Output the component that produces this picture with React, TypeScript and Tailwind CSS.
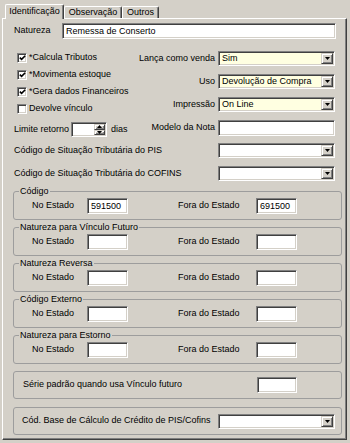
import React from "react";

const sunken =
  "border border-t-[#808080] border-l-[#808080] border-b-white border-r-white shadow-[inset_1px_1px_0_#404040,inset_-1px_-1px_0_#d4d0c8]";
const raised =
  "border border-t-[#d4d0c8] border-l-[#d4d0c8] border-b-[#404040] border-r-[#404040] shadow-[inset_1px_1px_0_#fff,inset_-1px_-1px_0_#808080] bg-[#d4d0c8]";

function Arrow({ up }: { up?: boolean }) {
  return (
    <svg width="5" height="3" viewBox="0 0 5 3" className="block">
      <path d={up ? "M2.5 0L5 3H0Z" : "M0 0H5L2.5 3Z"} fill="#000" />
    </svg>
  );
}

function Field({ value, className = "" }: { value?: string; className?: string }) {
  return (
    <div className={`${sunken} bg-white h-[16px] flex items-center pl-[3px] leading-none shrink-0 ${className}`}>
      {value}
    </div>
  );
}

function Select({ value, yellow }: { value?: string; yellow?: boolean }) {
  return (
    <div
      className={`${sunken} ${yellow ? "bg-[#ffffe1]" : "bg-white"} h-[15px] w-[117px] shrink-0 flex items-center p-[1px]`}
    >
      <span className="flex-1 pl-[2px] leading-none">{value}</span>
      <div className={`${raised} w-[12px] h-full flex items-center justify-center`}>
        <Arrow />
      </div>
    </div>
  );
}

function Check({ label, checked }: { label: string; checked?: boolean }) {
  return (
    <div className="h-[17px] flex items-center gap-[2px] pl-[4px]">
      <div className={`${sunken} bg-white w-[10px] h-[10px] flex items-center justify-center`}>
        {checked && (
          <svg width="7" height="6" viewBox="0 0 7 6" className="block">
            <path d="M0.8 2.6L2.6 4.4L6.2 0.8" stroke="#000" strokeWidth="1.6" fill="none" />
          </svg>
        )}
      </div>
      <span>{label}</span>
    </div>
  );
}

function RightRow({ label, children }: { label: string; children: React.ReactNode }) {
  return (
    <div className="h-[15px] flex items-center justify-end gap-[3px] pr-[7px]">
      <span>{label}</span>
      {children}
    </div>
  );
}

function Group({ title }: { title: string }) {
  return (
    <fieldset className="w-full border border-[#9d9d9d] rounded-[3px] px-0 pb-[5px]">
      <legend className="ml-[5px] px-[1px] leading-[13px]">{title}</legend>
      <div className="h-[16px] flex items-center pl-[18px]">
        <span className="w-[55px]">No Estado</span>
        <Field value={title === "Código" ? "591500" : ""} className="w-[41px]" />
        <span className="ml-[50px] w-[78px]">Fora do Estado</span>
        <Field value={title === "Código" ? "691500" : ""} className="w-[41px]" />
      </div>
    </fieldset>
  );
}

export default function App() {
  return (
    <div className="w-[350px] h-[443px] bg-[#d4d0c8] pt-[4px] px-[2px] text-[9px] text-black font-['Liberation_Sans',Arial,sans-serif]">
      <div className="flex items-end pl-[3px] h-[14px]">
        <div className="relative z-10 -mb-px h-[15px] w-[59px] bg-[#d4d0c8] border-t border-l border-white border-r border-r-[#404040] rounded-t-[2px] shadow-[inset_-1px_0_0_#808080] flex items-center justify-center">
          Identificação
        </div>
        <div className="h-[12px] w-[58px] border-t border-l border-white border-r border-r-[#404040] rounded-t-[2px] shadow-[inset_-1px_0_0_#808080] flex items-center justify-center">
          Observação
        </div>
        <div className="h-[12px] w-[37px] border-t border-l border-white border-r border-r-[#404040] rounded-t-[2px] shadow-[inset_-1px_0_0_#808080] flex items-center justify-center">
          Outros
        </div>
      </div>

      <div className="w-[345px] border border-t-white border-l-white border-r-[#404040] border-b-[#404040] shadow-[inset_-1px_-1px_0_#808080] pt-[4px] pl-[10px] pr-[4px] pb-[4px]">
        <div className="h-[16px] flex items-center pl-[1px]">
          <span className="w-[48px]">Natureza</span>
          <Field value="Remessa de Conserto" className="w-[274px]" />
        </div>

        <div className="mt-[10px] flex">
          <div className="w-[124px] shrink-0">
            <Check label="*Calcula Tributos" checked />
            <Check label="*Movimenta estoque" checked />
            <Check label="*Gera dados Financeiros" checked />
            <Check label="Devolve vínculo" />
            <div className="mt-[5px] h-[15px] flex items-center pl-[1px]">
              <span className="w-[57px]">Limite retorno</span>
              <div className={`${sunken} bg-white w-[36px] h-[15px] flex justify-end p-[1px]`}>
                <div className="w-[11px] flex flex-col">
                  <div className={`${raised} flex-1 flex items-center justify-center`}>
                    <Arrow up />
                  </div>
                  <div className={`${raised} flex-1 flex items-center justify-center`}>
                    <Arrow />
                  </div>
                </div>
              </div>
              <span className="ml-[4px]">dias</span>
            </div>
          </div>
          <div className="flex-1 pt-[2px] flex flex-col gap-[8px]">
            <RightRow label="Lança como venda">
              <Select value="Sim" yellow />
            </RightRow>
            <RightRow label="Uso">
              <Select value="Devolução de Compra" yellow />
            </RightRow>
            <RightRow label="Impressão">
              <Select value="On Line" yellow />
            </RightRow>
            <RightRow label="Modelo da Nota">
              <Field className="w-[117px] h-[15px]" />
            </RightRow>
          </div>
        </div>

        <div className="mt-[6px] flex flex-col gap-[8px] pl-[1px]">
          <div className="h-[15px] flex items-center justify-between pr-[7px]">
            <span>Código de Situação Tributária do PIS</span>
            <Select />
          </div>
          <div className="h-[15px] flex items-center justify-between pr-[7px]">
            <span>Código de Situação Tributária do COFINS</span>
            <Select />
          </div>
        </div>

        <div className="mt-[4px] flex flex-col gap-[1px]">
          <Group title="Código" />
          <Group title="Natureza para Vínculo Futuro" />
          <Group title="Natureza Reversa" />
          <Group title="Código Externo" />
          <Group title="Natureza para Estorno" />
        </div>

        <div className="mt-[7px] h-[28px] border border-[#9d9d9d] rounded-[3px] flex items-center justify-between pl-[9px] pr-[44px]">
          <span>Série padrão quando usa Vínculo futuro</span>
          <Field className="w-[40px]" />
        </div>

        <div className="mt-[8px] h-[28px] border border-[#9d9d9d] rounded-[3px] flex items-center justify-between pl-[8px] pr-[6px]">
          <span>Cód. Base de Cálculo de Crédito de PIS/Cofins</span>
          <Select />
        </div>
      </div>
    </div>
  );
}
